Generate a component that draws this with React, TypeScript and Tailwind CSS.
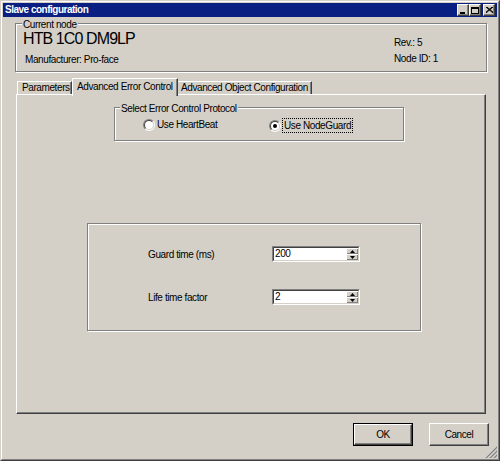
import React from 'react'

const font = "[font-family:'Liberation_Sans',Arial,sans-serif]"

function GroupBox({
  label,
  className,
  labelClass,
  children,
}: {
  label: string
  className: string
  labelClass: string
  children?: React.ReactNode
}) {
  return (
    <div className={`relative border border-[#808080] shadow-[inset_1px_1px_0_#fff,1px_1px_0_#fff] ${className}`}>
      <span className={`absolute bg-[#d4d0c8] px-[1px] leading-[13px] whitespace-nowrap ${labelClass}`}>{label}</span>
      {children}
    </div>
  )
}

function CapButton({ children }: { children: React.ReactNode }) {
  return (
    <div className="w-[12px] h-[12px] bg-[#d4d0c8] border border-t-white border-l-white border-b-[#404040] border-r-[#404040] shadow-[inset_-1px_-1px_0_#808080] flex items-center justify-center">
      {children}
    </div>
  )
}

function Radio({ checked }: { checked?: boolean }) {
  return (
    <div className="w-[12px] h-[12px] rounded-full border border-t-[#808080] border-l-[#808080] border-b-white border-r-white shrink-0">
      <div className="w-full h-full rounded-full bg-white border border-t-[#404040] border-l-[#404040] border-b-[#d4d0c8] border-r-[#d4d0c8] flex items-center justify-center">
        {checked && <div className="w-[4px] h-[4px] rounded-full bg-black" />}
      </div>
    </div>
  )
}

function Spin({ value }: { value: string }) {
  return (
    <div className="w-[88px] h-[16px] border border-t-[#808080] border-l-[#808080] border-b-white border-r-white">
      <div className="h-full bg-white border border-t-[#404040] border-l-[#404040] border-b-[#d4d0c8] border-r-[#d4d0c8] flex">
        <div className="flex-1 pl-[1px] leading-[12px]">{value}</div>
        <div className="w-[12px] flex flex-col">
          {[0, 1].map(i => (
            <div
              key={i}
              className="flex-1 bg-[#d4d0c8] border-t border-l border-t-white border-l-white shadow-[inset_-1px_-1px_0_#808080] flex items-center justify-center"
            >
              <svg width="5" height="3" viewBox="0 0 5 3">
                {i === 0 ? <path d="M2.5 0 L5 3 L0 3 Z" fill="#000" /> : <path d="M0 0 L5 0 L2.5 3 Z" fill="#000" />}
              </svg>
            </div>
          ))}
        </div>
      </div>
    </div>
  )
}

function PushButton({ label, isDefault }: { label: string; isDefault?: boolean }) {
  const inner = (
    <div className="w-full h-full bg-[#d4d0c8] border border-t-white border-l-white border-b-[#404040] border-r-[#404040] shadow-[inset_-1px_-1px_0_#808080] flex items-center justify-center">
      {label}
    </div>
  )
  return isDefault ? (
    <div className="w-[60px] h-[23px] border border-black">{inner}</div>
  ) : (
    <div className="w-[60px] h-[23px]">{inner}</div>
  )
}

export default function App() {
  return (
    <div className={`${font} text-[10px] tracking-[-0.4px] text-black w-[500px] h-[461px] bg-[#d4d0c8] border border-t-[#d4d0c8] border-l-[#d4d0c8] border-b-[#404040] border-r-[#404040]`}>
      <div className="h-full border border-t-white border-l-white border-b-[#808080] border-r-[#808080] p-[1px] flex flex-col">
        {/* title bar */}
        <div className="h-[14px] bg-[#0a1f82] flex items-center pl-[2px] pr-[2px]">
          <span className="text-white font-bold tracking-[-0.5px] leading-[14px]">Slave configuration</span>
          <div className="ml-auto flex">
            <CapButton>
              <svg width="7" height="7" viewBox="0 0 7 7">
                <rect x="0" y="5" width="5" height="2" fill="#000" />
              </svg>
            </CapButton>
            <CapButton>
              <svg width="8" height="7" viewBox="0 0 8 7">
                <rect x="0.5" y="0.5" width="7" height="6" fill="none" stroke="#000" />
                <rect x="0" y="0" width="8" height="2" fill="#000" />
              </svg>
            </CapButton>
            <div className="w-[2px]" />
            <CapButton>
              <svg width="7" height="6" viewBox="0 0 7 6">
                <path d="M0 0 L7 6 M7 0 L0 6 M1 0 L7 5.2 M6 0 L0 5.2" stroke="#000" strokeWidth="1" />
              </svg>
            </CapButton>
          </div>
        </div>

        {/* body */}
        <div className="relative flex-1 flex flex-col">
          <GroupBox label="Current node" className="mt-[6px] ml-[12px] w-[472px] h-[49px] flex" labelClass="top-[-6px] left-[6px]">
            <div className="flex-1 pl-[7px] pt-[5px]">
              <div className="text-[16px] tracking-[-0.9px] leading-[20px]">HTB 1C0 DM9LP</div>
              <div className="mt-[4px] pl-[2px] leading-[13px]">Manufacturer: Pro-face</div>
            </div>
            <div className="w-[92px] shrink-0 pt-[12px]">
              <div className="leading-[13px]">Rev.: 5</div>
              <div className="mt-[3px] leading-[13px]">Node ID: 1</div>
            </div>
          </GroupBox>

          {/* tabs */}
          <div className="mt-[6px] ml-[13px] w-[470px]">
            <div className="h-[16px] flex items-end pl-[1px]">
              <div className="w-[55px] h-[13px] border-t border-l border-r border-t-white border-l-white border-r-[#404040] shadow-[inset_-1px_0_0_#808080] pl-[4px] leading-[12px] whitespace-nowrap">
                Parameters
              </div>
              <div className="relative z-10 w-[106px] h-[18px] -mb-[2px] bg-[#d4d0c8] border-t border-l border-r border-t-white border-l-white border-r-[#404040] shadow-[inset_-1px_0_0_#808080] pl-[4px] pt-[2px] leading-[12px] whitespace-nowrap">
                Advanced Error Control
              </div>
              <div className="w-[134px] h-[13px] border-t border-r border-t-white border-r-[#404040] shadow-[inset_-1px_0_0_#808080] pl-[3px] leading-[12px] whitespace-nowrap">
                Advanced Object Configuration
              </div>
            </div>
            <div className="h-[320px] border border-t-white border-l-white border-b-[#404040] border-r-[#404040] shadow-[inset_-1px_-1px_0_#808080] flex flex-col">
              <GroupBox
                label="Select Error Control Protocol"
                className="mt-[12px] ml-[97px] w-[290px] h-[34px] flex items-start pl-[28px] pt-[10px]"
                labelClass="top-[-6px] left-[5px]"
              >
                <div className="w-[126px] flex items-center">
                  <Radio />
                  <span className="ml-[2px] leading-[13px]">Use HeartBeat</span>
                </div>
                <div className="flex items-center">
                  <Radio checked />
                  <span className="ml-[1px] border border-dotted border-black px-[1px] leading-[13px]">Use NodeGuard</span>
                </div>
              </GroupBox>

              <GroupBox label="" className="mt-[82px] ml-[70px] w-[334px] h-[108px] pt-[22px] pl-[60px]" labelClass="hidden">
                <div className="flex items-center">
                  <div className="w-[124px] leading-[13px]">Guard time (ms)</div>
                  <Spin value="200" />
                </div>
                <div className="flex items-center mt-[27px]">
                  <div className="w-[124px] leading-[13px]">Life time factor</div>
                  <Spin value="2" />
                </div>
              </GroupBox>
            </div>
          </div>

          {/* buttons */}
          <div className="mt-[9px] flex justify-end gap-[16px] pr-[8px]">
            <PushButton label="OK" isDefault />
            <PushButton label="Cancel" />
          </div>

          <svg className="absolute right-0 bottom-0" width="12" height="12" viewBox="0 0 12 12">
            <path d="M11 1 L1 11 M11 5 L5 11 M11 9 L9 11" stroke="#fff" strokeWidth="1" />
            <path d="M12 1 L1 12 M12 5 L5 12 M12 9 L9 12" stroke="#808080" strokeWidth="1.4" />
          </svg>
        </div>
      </div>
    </div>
  )
}
